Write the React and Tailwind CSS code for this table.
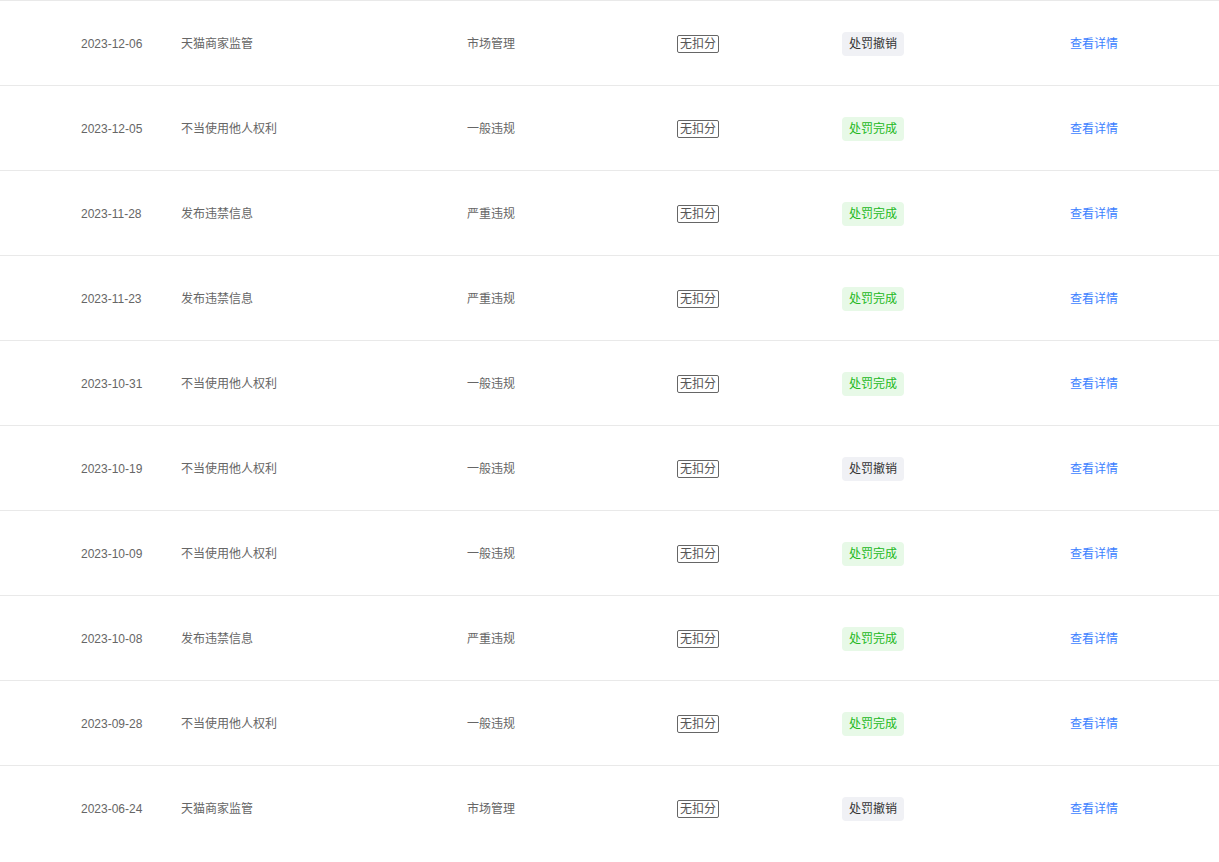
import React from "react";

const rows = [
  ["2023-12-06", "天猫商家监管", "市场管理", "revoked"],
  ["2023-12-05", "不当使用他人权利", "一般违规", "done"],
  ["2023-11-28", "发布违禁信息", "严重违规", "done"],
  ["2023-11-23", "发布违禁信息", "严重违规", "done"],
  ["2023-10-31", "不当使用他人权利", "一般违规", "done"],
  ["2023-10-19", "不当使用他人权利", "一般违规", "revoked"],
  ["2023-10-09", "不当使用他人权利", "一般违规", "done"],
  ["2023-10-08", "发布违禁信息", "严重违规", "done"],
  ["2023-09-28", "不当使用他人权利", "一般违规", "done"],
  ["2023-06-24", "天猫商家监管", "市场管理", "revoked"],
];

const StatusTag = ({ status }) =>
  status === "done" ? (
    <span className="inline-block rounded px-[7px] leading-[24px] bg-[#e7f9e7] text-[#22b822]">
      处罚完成
    </span>
  ) : (
    <span className="inline-block rounded px-[7px] leading-[24px] bg-[#f0f1f5] text-[#333]">
      处罚撤销
    </span>
  );

export default function App() {
  return (
    <div
      className="w-full min-h-[862px] bg-white text-[12px] text-[#666]"
      style={{ fontFamily: '"Liberation Sans", "Noto Sans CJK SC", sans-serif' }}
    >
      {rows.map(([date, title, type, status], i) => (
        <div
          key={i}
          className="grid grid-cols-[100px_286px_210px_165px_228px_1fr] items-center h-[85px] border-t border-[#e9e9e9] pl-[81px] pt-[2px]"
        >
          <span>{date}</span>
          <span>{title}</span>
          <span>{type}</span>
          <span>
            <span className="inline-block border border-[#666] rounded-[2px] px-[2px] leading-[16px] text-[#555]">
              无扣分
            </span>
          </span>
          <span>
            <StatusTag status={status} />
          </span>
          <span className="text-[#3d7fff] cursor-pointer">查看详情</span>
        </div>
      ))}
    </div>
  );
}
